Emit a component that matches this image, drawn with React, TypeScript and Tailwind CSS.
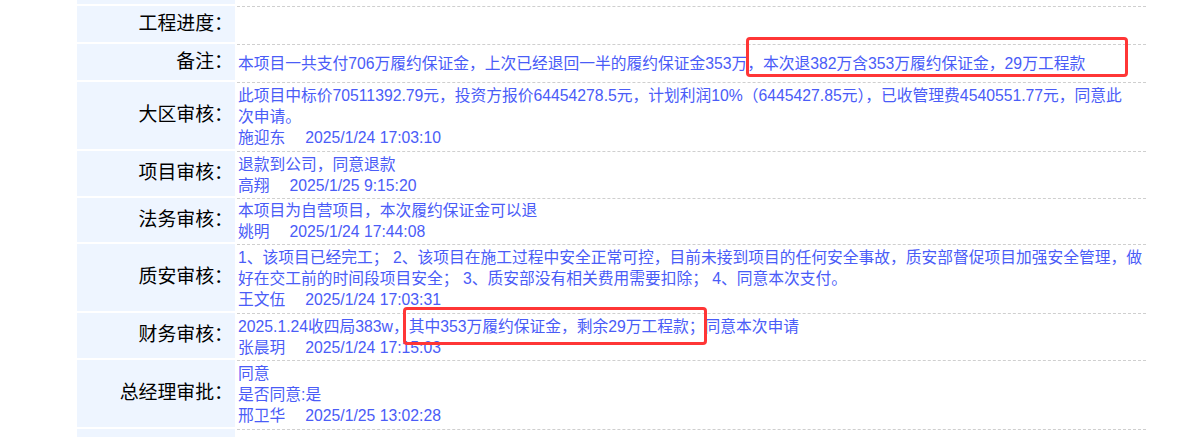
import React from 'react';

type Row = {
  label: string;
  h: string;
  lines: React.ReactNode[];
  sign?: { name: string; time: string };
};

const rows: Row[] = [
  { label: '工程进度：', h: 'h-[36px]', lines: [] },
  {
    label: '备注：',
    h: 'h-[36px]',
    lines: ['本项目一共支付706万履约保证金，上次已经退回一半的履约保证金353万，本次退382万含353万履约保证金，29万工程款'],
  },
  {
    label: '大区审核：',
    h: 'h-[67px]',
    lines: [
      '此项目中标价70511392.79元，投资方报价64454278.5元，计划利润10%（6445427.85元），已收管理费4540551.77元，同意此',
      '次申请。',
    ],
    sign: { name: '施迎东', time: '2025/1/24 17:03:10' },
  },
  {
    label: '项目审核：',
    h: 'h-[45px]',
    lines: ['退款到公司，同意退款'],
    sign: { name: '高翔', time: '2025/1/25 9:15:20' },
  },
  {
    label: '法务审核：',
    h: 'h-[44px]',
    lines: ['本项目为自营项目，本次履约保证金可以退'],
    sign: { name: '姚明', time: '2025/1/24 17:44:08' },
  },
  {
    label: '质安审核：',
    h: 'h-[67px]',
    lines: [
      '1、该项目已经完工； 2、该项目在施工过程中安全正常可控，目前未接到项目的任何安全事故，质安部督促项目加强安全管理，做',
      '好在交工前的时间段项目安全； 3、质安部没有相关费用需要扣除； 4、同意本次支付。',
    ],
    sign: { name: '王文伍', time: '2025/1/24 17:03:31' },
  },
  {
    label: '财务审核：',
    h: 'h-[45px]',
    lines: ['2025.1.24收四局383w，其中353万履约保证金，剩余29万工程款；同意本次申请'],
    sign: { name: '张晨玥', time: '2025/1/24 17:15:03' },
  },
  {
    label: '总经理审批：',
    h: 'h-[67px]',
    lines: ['同意', '是否同意:是'],
    sign: { name: '邢卫华', time: '2025/1/25 13:02:28' },
  },
];

const font = "font-['Liberation_Sans','Noto_Sans_CJK_SC',sans-serif]";

const App: React.FC = () => {
  return (
    <div className={`relative w-[1182px] h-[437px] overflow-hidden bg-white ${font}`}>
      <div className="ml-[77px] grid grid-cols-[158px_909px] gap-x-[2px] gap-y-[2px]">
        {/* row cut off at the top */}
        <div className="h-[4px] bg-[#eef5ff]" />
        <div className="h-[4px]" />

        {rows.map((r) => (
          <React.Fragment key={r.label}>
            <div className={`${r.h} bg-[#eef5ff] flex items-center justify-end pr-[2px] text-[18.9px] text-black`}>
              {r.label}
            </div>
            <div
              className={`${r.h} border-t border-dashed border-[#cfcfcf] pl-[1px] pt-[1px] flex flex-col justify-center text-[15.75px] leading-[21px] text-[#4a5cf7]`}
            >
              {r.lines.map((l, i) => (
                <div key={i} className="whitespace-nowrap">{l}</div>
              ))}
              {r.sign && (
                <div className="whitespace-nowrap">
                  <span>{r.sign.name}</span>
                  <span className="ml-[20px]">{r.sign.time}</span>
                </div>
              )}
            </div>
          </React.Fragment>
        ))}

        {/* next row, cut off at the bottom */}
        <div className="h-[20px] bg-[#eef5ff]" />
        <div className="h-[20px] border-t border-dashed border-[#cfcfcf]" />
      </div>

      {/* red annotation boxes */}
      <div className="absolute left-[746px] top-[37px] w-[382px] h-[40px] border-[3px] border-[#ff3636] rounded-[4px]" />
      <div className="absolute left-[403px] top-[307px] w-[304px] h-[38px] border-[3px] border-[#ff3636] rounded-[4px]" />
    </div>
  );
};

export default App;
